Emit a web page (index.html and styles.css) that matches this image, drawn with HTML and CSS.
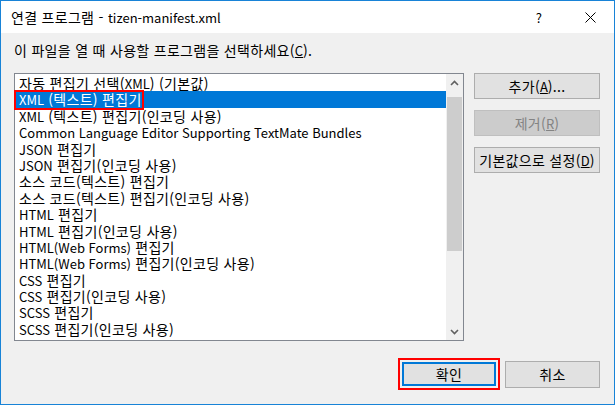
FILE: index.html
```html
<!DOCTYPE html>
<html lang="ko">
<head>
<meta charset="utf-8">
<title>연결 프로그램</title>
<link rel="stylesheet" href="styles.css">
</head>
<body>
<div class="dialog">
  <div class="titlebar">
    <span class="title">연결 프로그램 - <span class="l">tizen-manifest.xml</span></span>
    <span class="tb-help">?</span>
    <span class="tb-close"><svg width="11" height="11" viewBox="0 0 11 11"><path d="M0.5 0.5 L10.5 10.5 M10.5 0.5 L0.5 10.5" stroke="#000" stroke-width="1" fill="none"/></svg></span>
  </div>
  <div class="content">
    <div class="prompt">이 파일을 열 때 사용할 프로그램을 선택하세요(<u class="l">C</u>).</div>
    <div class="main">
      <div class="listbox">
        <ul class="items">
          <li>자동 편집기 선택(<span class="l">XML</span>) (기본값)</li>
          <li class="selected"><span class="l">XML</span> (텍스트) 편집기</li>
          <li><span class="l">XML</span> (텍스트) 편집기(인코딩 사용)</li>
          <li><span class="l">Common Language Editor Supporting TextMate Bundles</span></li>
          <li><span class="l">JSON</span> 편집기</li>
          <li><span class="l">JSON</span> 편집기(인코딩 사용)</li>
          <li>소스 코드(텍스트) 편집기</li>
          <li>소스 코드(텍스트) 편집기(인코딩 사용)</li>
          <li><span class="l">HTML</span> 편집기</li>
          <li><span class="l">HTML</span> 편집기(인코딩 사용)</li>
          <li><span class="l">HTML(Web Forms)</span> 편집기</li>
          <li><span class="l">HTML(Web Forms)</span> 편집기(인코딩 사용)</li>
          <li><span class="l">CSS</span> 편집기</li>
          <li><span class="l">CSS</span> 편집기(인코딩 사용)</li>
          <li><span class="l">SCSS</span> 편집기</li>
          <li><span class="l">SCSS</span> 편집기(인코딩 사용)</li>
        </ul>
        <div class="scrollbar">
          <div class="sb-arrow"><svg width="9" height="6" viewBox="0 0 9 6"><path d="M1 5 L4.5 1.5 L8 5" stroke="#606060" stroke-width="1.6" fill="none"/></svg></div>
          <div class="sb-track"><div class="sb-thumb"></div></div>
          <div class="sb-arrow"><svg width="9" height="6" viewBox="0 0 9 6"><path d="M1 1 L4.5 4.5 L8 1" stroke="#606060" stroke-width="1.6" fill="none"/></svg></div>
        </div>
        <div class="mark mark-item"></div>
      </div>
      <div class="side">
        <button class="btn">추가(<u class="l">A</u>)...</button>
        <button class="btn disabled">제거(<u class="l">R</u>)</button>
        <button class="btn">기본값으로 설정(<u class="l">D</u>)</button>
      </div>
    </div>
    <div class="footer">
      <span class="mark-wrap"><button class="btn default">확인</button></span>
      <button class="btn footer-btn">취소</button>
    </div>
  </div>
</div>
</body>
</html>
```
FILE: styles.css
```css
* { box-sizing: border-box; }
html, body { margin: 0; padding: 0; }
body {
  width: 615px;
  height: 405px;
  font-family: "Noto Sans CJK KR", "Noto Sans", sans-serif;
  font-size: 14px;
  letter-spacing: 0.3px;
  color: #000;
  background: #f0f0f0;
}
.l {
  font-size: 13px;
  letter-spacing: 0;
}
.dialog {
  width: 615px;
  height: 405px;
  border: 1px solid #1883d7;
  background: #f0f0f0;
  display: flex;
  flex-direction: column;
}
.titlebar {
  height: 32px;
  flex: none;
  background: #fff;
  display: flex;
  align-items: center;
  padding-left: 10px;
}
.title {
  flex: 1;
  line-height: 16px;
}
.tb-help {
  width: 20px;
  text-align: center;
  font-size: 13px;
  margin-right: 36px;
}
.tb-close {
  width: 12px;
  height: 11px;
  display: flex;
  margin-right: 17px;
}
.content {
  flex: 1;
  display: flex;
  flex-direction: column;
  padding: 9px 14px 0 13px;
}
.prompt {
  line-height: 16px;
  height: 16px;
}
u { text-decoration: underline; text-underline-offset: 1px; }
.main {
  display: flex;
  margin-top: 15px;
  gap: 10px;
}
.listbox {
  position: relative;
  width: 451px;
  height: 268px;
  border: 1px solid #828790;
  background: #fff;
  display: flex;
}
.items {
  list-style: none;
  margin: 0;
  padding: 1px 0 0 0;
  flex: 1;
  overflow: hidden;
}
.items li {
  height: 16.4px;
  line-height: 16px;
  padding-left: 4px;
  white-space: nowrap;
}
.items li.selected {
  background: #0078d7;
  color: #fff;
}
.scrollbar {
  width: 17px;
  flex: none;
  background: #f0f0f0;
  display: flex;
  flex-direction: column;
}
.sb-arrow {
  height: 17px;
  display: flex;
  align-items: center;
  justify-content: center;
}
.sb-track {
  flex: 1;
  padding: 6px 1px 0 1px;
}
.sb-thumb {
  height: 154px;
  background: #cdcdcd;
}
.mark {
  position: absolute;
  border: 2px solid #f00;
}
.mark-item {
  left: -1px;
  top: 16px;
  width: 130px;
  height: 20px;
}
.side {
  display: flex;
  flex-direction: column;
  gap: 11px;
}
.btn {
  font-family: inherit;
  font-size: 14px;
  letter-spacing: 0.3px;
  color: #000;
  width: 126px;
  height: 26px;
  background: #e1e1e1;
  border: 1px solid #adadad;
  padding: 0;
  line-height: 16px;
}
.btn.disabled {
  background: #cccccc;
  border-color: #bfbfbf;
  color: #838383;
}
.footer {
  display: flex;
  justify-content: flex-end;
  align-items: center;
  gap: 5px;
  margin-top: 17px;
}
.mark-wrap {
  display: flex;
  border: 2px solid #f00;
  padding: 2px;
}
.btn.default {
  width: 94px;
  height: 24px;
  border: 1px solid #0078d7;
  box-shadow: inset 0 0 0 1px #0078d7;
}
.footer-btn {
  width: 95px;
  height: 27px;
}
```
